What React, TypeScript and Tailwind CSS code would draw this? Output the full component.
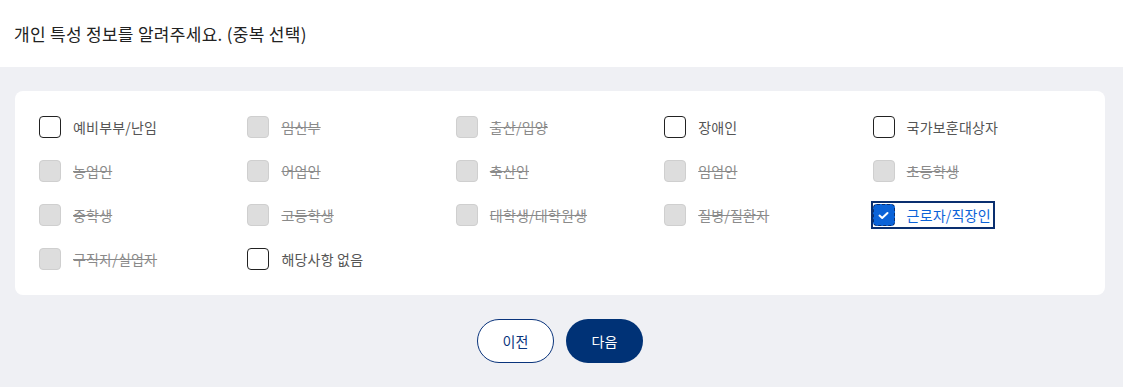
import React, { useState } from "react";

const items: { label: string; disabled: boolean }[] = [
  { label: "예비부부/난임", disabled: false },
  { label: "임신부", disabled: true },
  { label: "출산/입양", disabled: true },
  { label: "장애인", disabled: false },
  { label: "국가보훈대상자", disabled: false },
  { label: "농업인", disabled: true },
  { label: "어업인", disabled: true },
  { label: "축산인", disabled: true },
  { label: "임업인", disabled: true },
  { label: "초등학생", disabled: true },
  { label: "중학생", disabled: true },
  { label: "고등학생", disabled: true },
  { label: "대학생/대학원생", disabled: true },
  { label: "질병/질환자", disabled: true },
  { label: "근로자/직장인", disabled: false },
  { label: "구직자/실업자", disabled: true },
  { label: "해당사항 없음", disabled: false },
];

export default function App() {
  const [checked, setChecked] = useState<string[]>(["근로자/직장인"]);
  const font = { fontFamily: '"Noto Sans CJK KR", "Noto Sans", sans-serif' };
  return (
    <div className="w-[1123px] h-[387px] flex flex-col bg-[#eff0f4]" style={font}>
      <div className="h-[67px] bg-white flex items-center px-[14px]">
        <h1 className="text-[17px] tracking-[0.3px] text-[#222] leading-none">개인 특성 정보를 알려주세요. (중복 선택)</h1>
      </div>
      <div className="w-[1120px] px-[15px] pt-[24px]">
        <div className="bg-white rounded-[8px] h-[204px] px-[24px] pt-[25px]">
          <div className="grid grid-cols-5 gap-y-[22px]">
            {items.map((it) => {
              const isOn = checked.includes(it.label);
              if (it.disabled) {
                return (
                  <div key={it.label} className="flex items-center h-[22px] gap-[12px]">
                    <span className="w-[22px] h-[22px] rounded-[4px] bg-[#dddddd] border border-[#cfcfcf] shrink-0" />
                    <span className="text-[14px] tracking-[0.2px] text-[#8a8a8a] line-through decoration-[#8a8a8a]">{it.label}</span>
                  </div>
                );
              }
              if (isOn) {
                return (
                  <div key={it.label} className="flex items-center h-[22px]">
                    <span
                      onClick={() => setChecked(checked.filter((c) => c !== it.label))}
                      className="flex items-center gap-[12px] h-[24px] ring-2 ring-[#0a2f6f] pr-[2px] cursor-pointer"
                    >
                      <span className="w-[22px] h-[22px] rounded-[4px] bg-[#0b63d8] border border-dashed border-[#0a2f6f] shrink-0 flex items-center justify-center">
                        <svg width="11" height="9" viewBox="0 0 11 9" fill="none">
                          <path d="M1.5 4.6 L4.2 7 L9.5 2" stroke="white" strokeWidth="2" strokeLinecap="round" strokeLinejoin="round" />
                        </svg>
                      </span>
                      <span className="text-[14px] tracking-[0.2px] text-[#0b63d8] leading-[22px]">{it.label}</span>
                    </span>
                  </div>
                );
              }
              return (
                <div
                  key={it.label}
                  onClick={() => setChecked([...checked, it.label])}
                  className="flex items-center h-[22px] gap-[12px] cursor-pointer"
                >
                  <span className="w-[22px] h-[22px] rounded-[4px] bg-white border border-[#222] shrink-0" />
                  <span className="text-[14px] tracking-[0.2px] text-[#555]">{it.label}</span>
                </div>
              );
            })}
          </div>
        </div>
      </div>
      <div className="w-[1120px] flex justify-center gap-[12px] pt-[24px]">
        <button className="w-[77px] h-[44px] rounded-full border border-[#0a347c] bg-white text-[14px] text-[#0a347c]">이전</button>
        <button className="w-[77px] h-[44px] rounded-full bg-[#003276] text-[14px] text-white">다음</button>
      </div>
    </div>
  );
}
